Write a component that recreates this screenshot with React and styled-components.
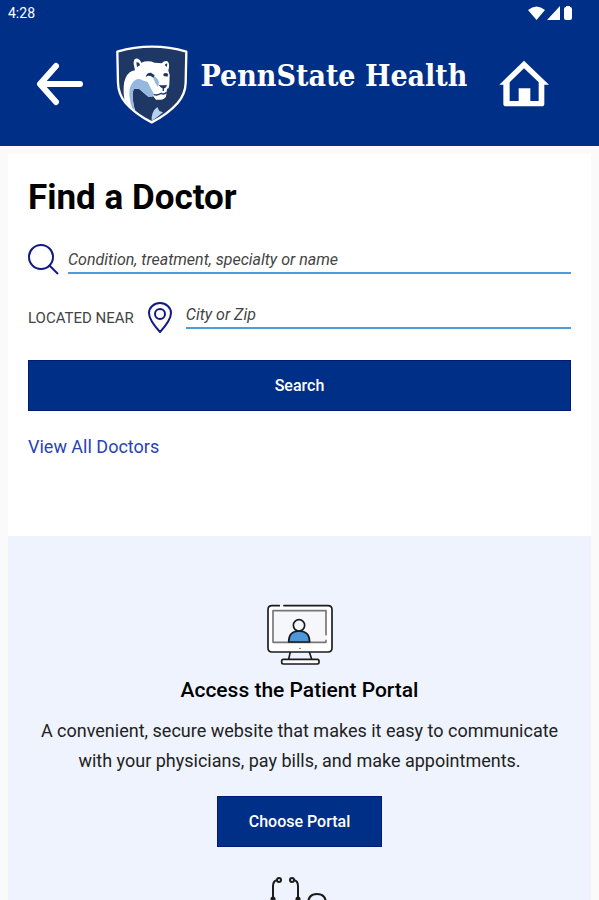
import styled, { createGlobalStyle } from 'styled-components';

const GlobalStyle = createGlobalStyle`
    * {
        box-sizing: border-box;
    }
    html {
        scrollbar-width: none;
    }
    body {
        margin: 0;
        background-color: #fafafb;
        color: #000;
        font-family: Roboto, "Liberation Sans", sans-serif;
    }
`

const TopBar = styled.header`
        background-color: #002f87;
        color: #fff;
`

const StatusBar = styled.div`
        display: flex;
        align-items: center;
        justify-content: space-between;
        height: 26px;
        padding: 0 26px 0 8px;
        font-size: 14px;
`

const StatusIcons = styled.div`
        display: flex;
        gap: 2px;
`

const NavBar = styled.nav`
        display: flex;
        align-items: center;
        height: 120px;
        padding: 0 50px 4px 36px;
`

const NavButton = styled.button`
        display: flex;
        padding: 0;
        border: 0;
        background: none;
        color: inherit;
        cursor: pointer;
`

const Brand = styled.a`
        display: flex;
        flex: 1;
        justify-content: center;
        gap: 13px;
        color: inherit;
        text-decoration: none;
`

const BrandName = styled.span`
        padding-top: 14px;
        font-family: "DejaVu Serif Condensed", "DejaVu Serif", serif;
        font-size: 30px;
        font-weight: 700;
        line-height: 33px;
        white-space: nowrap;
`

const Main = styled.main`
        padding: 8px 8px 0;
`

const FinderCard = styled.form`
        height: 382px;
        padding: 22px 20px 20px;
        background-color: #fff;
`

const Title = styled.h1`
        margin: 0 0 24px;
        font-size: 35px;
        font-weight: 700;
        line-height: 44px;
`

const FieldRow = styled.div`
        display: flex;
        align-items: flex-end;
        gap: ${props => props.gap}px;
        margin-bottom: 26px;
`

const FieldLabel = styled.label`
        display: flex;
        align-items: center;
        gap: 14px;
        color: #444;
        font-size: 15px;
`

const Field = styled.input`
        flex: 1;
        min-width: 0;
        height: 28px;
        margin-bottom: ${props => props.space}px;
        padding: 0;
        border: 0;
        border-bottom: 2px solid #4a9edb;
        border-radius: 0;
        outline: 0;
        background: none;
        font-family: inherit;
        font-size: 16px;
        font-style: italic;

        &::placeholder {
            color: #444;
            opacity: 1;
        }
`

const Button = styled.button`
        width: ${props => props.$wide ? '100%' : 'auto'};
        height: 51px;
        padding: 0 31px;
        border: 1px solid #001a78;
        border-radius: 0;
        background-color: #002f87;
        color: #fff;
        font-family: inherit;
        font-size: 16px;
        font-weight: 500;
        cursor: pointer;
`

const TextLink = styled.a`
        display: inline-block;
        margin-top: 24px;
        color: #2743b5;
        font-size: 18px;
        line-height: 24px;
        text-decoration: none;
`

const Panels = styled.div`
        padding: 68px 20px 0;
        background-color: #eef3fd;
`

const Panel = styled.section`
        display: flex;
        flex-direction: column;
        align-items: center;
        margin-bottom: 29px;
        text-align: center;
`

const PanelTitle = styled.h2`
        margin: 10px 0 12px;
        font-size: 21px;
        font-weight: 500;
        line-height: 28px;
`

const PanelText = styled.p`
        margin: 0 0 20px;
        color: #222;
        font-size: 18px;
        line-height: 30px;
`

const Wifi = () => (
    <svg width="17" height="14" viewBox="0 0 17 14" fill="#fff">
        <path d="M0 4 Q8.500 -3 17 4 L8.500 14 Z" />
    </svg>
)

const Signal = () => (
    <svg width="14" height="14" viewBox="0 0 14 14" fill="#fff">
        <path d="M13 0 V14 H0 Z" />
    </svg>
)

const Battery = () => (
    <svg width="10" height="14" viewBox="0 0 10 14" fill="#fff">
        <path d="M3 0 H7 V1 Q9 1 9 3 V12 Q9 14 7 14 H3 Q1 14 1 12 V3 Q1 1 3 1 Z" />
    </svg>
)

const BackArrow = () => (
    <svg width="48" height="44" viewBox="0 0 48 44" fill="none" stroke="#fff" strokeWidth="6" strokeLinecap="round" strokeLinejoin="round">
        <path d="M44 22 H5 M20 4 L4 22 L20 40" />
    </svg>
)

const House = () => (
    <svg width="50" height="48" viewBox="57 179 150 144">
        <path fill="#fff" d="M132 181 L207 253 H193 V310 Q193 318 185 318 H78 Q70 318 70 310 V253 H58 Z" />
        <path fill="#002f87" d="M132 204 L176 246 V302 H151 V264 H116 V302 H89 V246 Z" />
    </svg>
)

const Shield = () => (
    <svg width="72" height="79" viewBox="27 31 216 237">
        <path d="M31 51 Q82 36 135 36 Q188 36 238 51 L236 145 Q235 178 212 205 Q182 239 134 263 Q86 239 56 205 Q34 179 33 145 Z" fill="#1e3765" />
        <path d="M80 88 Q79 74 86 72 Q96 70 103 84 Q122 76 143 84 L164 86 Q172 77 180 79 Q188 84 186 98 L184 108 L188 120 L187 150 Q187 160 180 163 L177 186 Q168 198 147 195 L138 184 L124 186 L96 162 L80 163 Q72 182 84 228 L62 209 L52 195 Q46 150 56 129 Q65 110 84 107 Z" fill="#fff" />
        <path d="M84 137 Q95 129 106 137 L122 142 L131 160 L141 178 L136 187 L124 186 L96 162 L80 163 Q72 182 84 228 L75 219 Q64 185 68 162 Q73 145 84 137 Z" fill="#94b8df" />
        <path d="M136 124 Q151 125 156 143 L153 157 L146 147 Z" fill="#94b8df" />
        <path d="M151 217 L157 229 L168 233 Q151 248 134 259 Q132 231 151 217 Z" fill="#b5d2ee" />
        <path d="M88 83 Q97 81 99 92 L90 97 Z M173 91 Q177 85 181 87 L179 97 Z M116 127 Q119 113 132 114 L143 122 L139 129 Q126 118 116 127 Z M169 118 Q176 112 184 119 L181 126 L170 124 Z M155 150 Q168 153 180 150 L177 158 L169 163 Q160 159 155 150 Z" fill="#1e3765" />
        <path d="M169 161 V169 M140 180 Q154 183 163 176 Q171 181 179 173" fill="none" stroke="#1e3765" strokeWidth="4" />
        <path d="M31 51 Q82 36 135 36 Q188 36 238 51 L236 145 Q235 178 212 205 Q182 239 134 263 Q86 239 56 205 Q34 179 33 145 Z" fill="none" stroke="#fff" strokeWidth="7" strokeLinejoin="round" />
    </svg>
)

const SearchIcon = () => (
    <svg width="31" height="31" viewBox="0 0 31 31" fill="none" stroke="#101a82" strokeWidth="2">
        <circle cx="13" cy="13" r="12" />
        <path d="M21 21 L30 30" />
    </svg>
)

const PinIcon = () => (
    <svg width="24" height="32" viewBox="0 0 24 32" fill="none" stroke="#101a82" strokeWidth="2">
        <path d="M12 30 Q1 18 1 11 A11 10 0 0 1 23 11 Q23 18 12 30 Z" strokeLinejoin="round" />
        <circle cx="12" cy="12" r="5" />
    </svg>
)

const MonitorIcon = () => (
    <svg width="68" height="62" viewBox="78 42 204 186" fill="none" strokeLinecap="round" strokeLinejoin="round">
        <path d="M151 185 L146 208 M208 185 L215 208" stroke="#1b1b1b" strokeWidth="5" />
        <rect x="125" y="208" width="112" height="14" rx="5" fill="#fff" stroke="#1b1b1b" strokeWidth="5" />
        <rect x="84" y="47" width="192" height="139" rx="12" fill="#fff" />
        <path d="M132 47 H264 Q276 47 276 59 V174 Q276 186 264 186 H96 Q84 186 84 174 V59 Q84 47 96 47 H118" stroke="#1b1b1b" strokeWidth="5" />
        <path d="M258 134 V62 H99 V157 H258 V151" fill="#f5f7fa" stroke="#777" strokeWidth="5" />
        <path d="M146 156 Q146 123 177 123 Q209 123 209 156 Z" fill="#4e97da" stroke="#1b1b1b" strokeWidth="5" />
        <circle cx="177" cy="106" r="17" fill="#f5f7fa" stroke="#1b1b1b" strokeWidth="5" />
        <circle cx="180" cy="175" r="2" fill="#1b1b1b" />
    </svg>
)

const StethoscopeIcon = () => (
    <svg width="60" height="64" viewBox="0 0 60 64" fill="none" stroke="#1b1b1b" strokeWidth="2" strokeLinecap="round">
        <circle cx="9" cy="4" r="2" />
        <circle cx="22" cy="4" r="2" />
        <path d="M7 4 Q3 5 3 10 V30 Q3 42 15 42 Q28 42 28 30 V10 Q28 5 24 4" />
        <path d="M3 23 V34 M28 23 V34" strokeWidth="5" />
        <path d="M15 42 V50 Q15 60 26 60 Q38 60 38 50 V28 Q38 18 47 18 Q56 18 56 28 V36" />
        <circle cx="56" cy="41" r="3" fill="#4e97da" />
    </svg>
)

const App = () => {
    return (
        <>
            <GlobalStyle />
            <TopBar>
                <StatusBar>
                    <span>4:28</span>
                    <StatusIcons>
                        <Wifi />
                        <Signal />
                        <Battery />
                    </StatusIcons>
                </StatusBar>
                <NavBar>
                    <NavButton type="button" aria-label="Back">
                        <BackArrow />
                    </NavButton>
                    <Brand href="#">
                        <Shield />
                        <BrandName>PennState Health</BrandName>
                    </Brand>
                    <NavButton type="button" aria-label="Home">
                        <House />
                    </NavButton>
                </NavBar>
            </TopBar>
            <Main>
                <FinderCard onSubmit={e => e.preventDefault()}>
                    <Title>Find a Doctor</Title>
                    <FieldRow gap={9}>
                        <FieldLabel htmlFor="query" aria-label="Search doctors">
                            <SearchIcon />
                        </FieldLabel>
                        <Field id="query" type="text" space={1} placeholder="Condition, treatment, specialty or name" />
                    </FieldRow>
                    <FieldRow gap={14}>
                        <FieldLabel htmlFor="place">
                            LOCATED NEAR
                            <PinIcon />
                        </FieldLabel>
                        <Field id="place" type="text" space={5} placeholder="City or Zip" />
                    </FieldRow>
                    <Button type="submit" $wide>Search</Button>
                    <TextLink href="#">View All Doctors</TextLink>
                </FinderCard>
                <Panels>
                    <Panel>
                        <MonitorIcon />
                        <PanelTitle>Access the Patient Portal</PanelTitle>
                        <PanelText>
                            A convenient, secure website that makes it easy to communicate with your physicians, pay bills, and make appointments.
                        </PanelText>
                        <Button type="button">Choose Portal</Button>
                    </Panel>
                    <Panel>
                        <StethoscopeIcon />
                    </Panel>
                </Panels>
            </Main>
        </>
    )
}

export default App;
